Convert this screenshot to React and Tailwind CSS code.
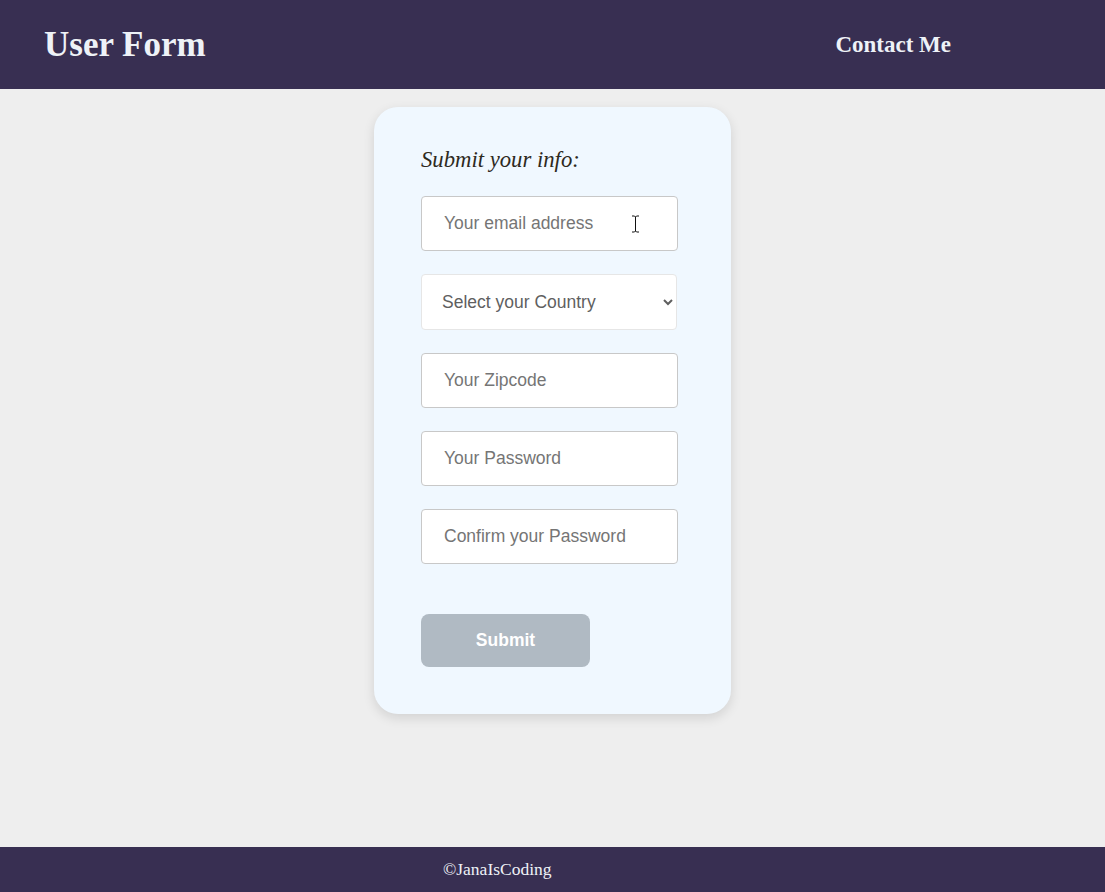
import React from "react";

export default function App() {
  const inputCls =
    "block w-[257px] h-[55px] rounded-[4px] border border-[#c8c8c8] bg-white pl-[22px] pr-3 text-[17.5px] text-[#333] placeholder:text-[#757575] outline-none";
  return (
    <div className="flex min-h-screen flex-col bg-[#eeeeee]" style={{ minHeight: 892 }}>
      <header className="flex h-[89px] shrink-0 items-center bg-[#382f52] text-[#eef2f7] [font-family:'Liberation_Serif',serif]">
        <h1 className="pl-[44px] text-[35px] font-bold leading-none">User Form</h1>
        <div className="ml-auto pr-[154px] text-[23px] font-bold leading-none">Contact Me</div>
      </header>
      <main className="flex flex-1 justify-center">
        <form
          className="mt-[18px] mb-auto w-[357px] rounded-[24px] bg-[#f0f8ff] pt-[39px] pb-[47px] pl-[47px] shadow-[0_4px_12px_rgba(0,0,0,0.12)] [font-family:'Liberation_Sans',Arial,sans-serif]"
          onSubmit={(e) => e.preventDefault()}
        >
          <h2 className="mb-[22px] text-[22.7px] italic font-normal leading-[28px] text-[#2e2a1e] [font-family:'Liberation_Serif',serif]">
            Submit your info:
          </h2>
          <div className="relative">
            <input className={inputCls} placeholder="Your email address" />
            <svg
              className="pointer-events-none absolute left-[210px] top-[19px]"
              width="9"
              height="18"
              viewBox="0 0 9 18"
            >
              <path d="M1 1h2.5l1 1 1-1H8M4.5 2v14M1 17h2.5l1-1 1 1H8" fill="none" stroke="#111" strokeWidth="1" />
            </svg>
          </div>
          <select
            className="mt-[23px] block h-[56px] w-[256px] rounded-[4px] border border-[#e6e6e6] bg-white pl-[16px] pr-2 text-[17.5px] text-[#5f5f5f] outline-none"
            defaultValue=""
          >
            <option value="" disabled>
              Select your Country
            </option>
            <option>United States</option>
            <option>Canada</option>
            <option>Germany</option>
          </select>
          <input className={`${inputCls} mt-[23px]`} placeholder="Your Zipcode" />
          <input className={`${inputCls} mt-[23px]`} type="password" placeholder="Your Password" />
          <input className={`${inputCls} mt-[23px]`} type="password" placeholder="Confirm your Password" />
          <button
            type="submit"
            className="mt-[50px] block h-[53px] w-[169px] rounded-[8px] bg-[#b0bac3] text-[17.5px] font-bold text-white"
          >
            Submit
          </button>
        </form>
      </main>
      <footer className="flex h-[45px] shrink-0 items-center bg-[#382f52] pl-[443px] text-[17.5px] text-[#eef2f7] [font-family:'Liberation_Serif',serif]">
        ©JanaIsCoding
      </footer>
    </div>
  );
}
